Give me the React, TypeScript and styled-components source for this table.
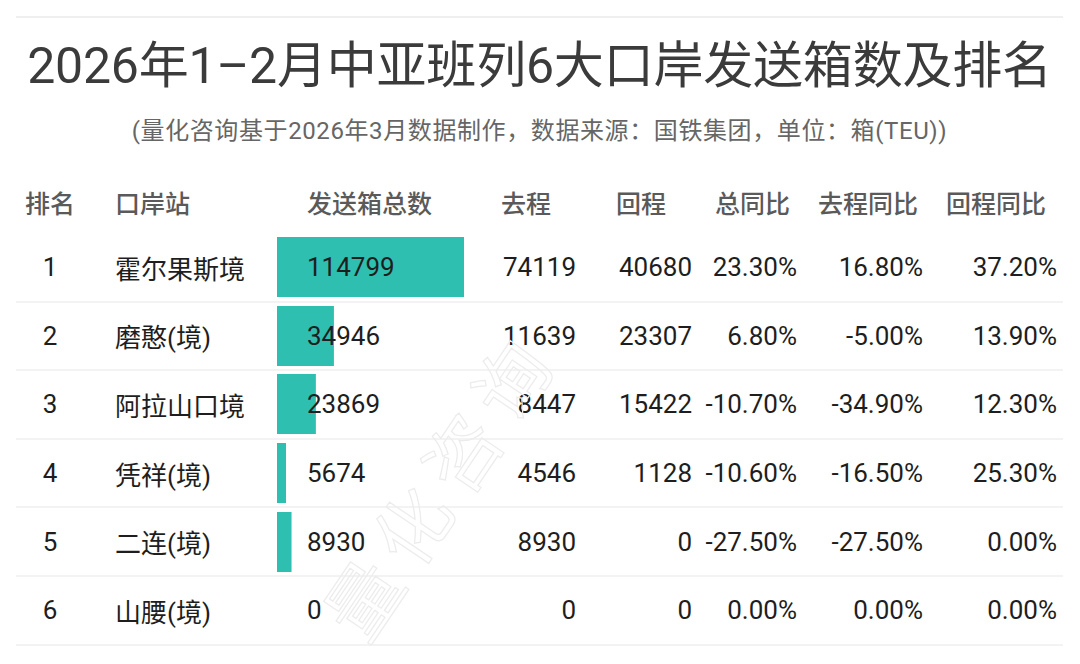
import React from "react";
import styled, { createGlobalStyle } from "styled-components";

const GlobalStyle = createGlobalStyle`
  html, body {
    margin: 0;
    padding: 0;
    background: #fff;
  }
  body {
    font-family: Roboto, "Noto Sans CJK SC", sans-serif;
  }
`;

const Page = styled.div`
  position: relative;
  width: 1080px;
  height: 664px;
  padding: 16px 17px 0 16px;
  box-sizing: border-box;
  overflow: hidden;
`;

const Rule = styled.div`
  height: 2px;
  background: #efefef;
`;

const Title = styled.h1`
  margin: 18px 0 0;
  font-size: 50px;
  line-height: 60px;
  font-weight: 400;
  color: #3b3b3b;
  text-align: center;
  letter-spacing: -0.2px;
  white-space: nowrap;
`;

const Subtitle = styled.p`
  margin: 19px 0 0;
  font-size: 24px;
  line-height: 32px;
  letter-spacing: 0.6px;
  color: #666;
  text-align: center;
  white-space: nowrap;
`;

const Table = styled.div`
  margin-top: 27px;
`;

const Row = styled.div<{ $head?: boolean }>`
  display: grid;
  grid-template-columns: 68px 193px 223px 76px 116px 105px 126px 134px;
  align-items: center;
  height: ${(p) => (p.$head ? "60px" : "68.6px")};
  padding-bottom: ${(p) => (p.$head ? "5px" : "0")};
  box-sizing: border-box;
  border-bottom: ${(p) => (p.$head ? "none" : "2px solid #f3f3f3")};
`;

const HeadCell = styled.div<{ $pad: number; $center?: boolean }>`
  font-size: 25px;
  font-weight: 500;
  color: #5a5a5a;
  padding-left: ${(p) => p.$pad}px;
  text-align: ${(p) => (p.$center ? "center" : "left")};
  white-space: nowrap;
`;

type Align = "left" | "center" | "right";

const Cell = styled.div<{ $align: Align; $pad?: number }>`
  font-size: 26px;
  color: #1e1e1e;
  text-align: ${(p) => p.$align};
  padding-left: ${(p) => p.$pad ?? 0}px;
  white-space: nowrap;
`;

const BarCell = styled.div`
  height: 100%;
  display: flex;
  align-items: center;
  padding-left: 30px;
  font-size: 26px;
  color: #1e1e1e;
  background-image: linear-gradient(#2fbfb0, #2fbfb0);
  background-repeat: no-repeat;
  background-position: left center;
`;

const Watermark = styled.div`
  position: absolute;
  left: 438px;
  top: 482px;
  transform: translate(-50%, -50%) rotate(-56deg);
  font-family: "Noto Sans CJK SC", sans-serif;
  font-size: 74px;
  line-height: 1;
  letter-spacing: 14px;
  color: transparent;
  -webkit-text-stroke: 1.2px #ececec;
  pointer-events: none;
  white-space: nowrap;
`;

const heads = [
  { label: "排名", pad: 0, center: true },
  { label: "口岸站", pad: 31 },
  { label: "发送箱总数", pad: 30 },
  { label: "去程", pad: 1 },
  { label: "回程", pad: 40 },
  { label: "总同比", pad: 23 },
  { label: "去程同比", pad: 21 },
  { label: "回程同比", pad: 23 },
];

const rows = [
  { rank: 1, port: "霍尔果斯境", total: 114799, out: 74119, back: 40680, yoy: "23.30%", outYoy: "16.80%", backYoy: "37.20%" },
  { rank: 2, port: "磨憨(境)", total: 34946, out: 11639, back: 23307, yoy: "6.80%", outYoy: "-5.00%", backYoy: "13.90%" },
  { rank: 3, port: "阿拉山口境", total: 23869, out: 8447, back: 15422, yoy: "-10.70%", outYoy: "-34.90%", backYoy: "12.30%" },
  { rank: 4, port: "凭祥(境)", total: 5674, out: 4546, back: 1128, yoy: "-10.60%", outYoy: "-16.50%", backYoy: "25.30%" },
  { rank: 5, port: "二连(境)", total: 8930, out: 8930, back: 0, yoy: "-27.50%", outYoy: "-27.50%", backYoy: "0.00%" },
  { rank: 6, port: "山腰(境)", total: 0, out: 0, back: 0, yoy: "0.00%", outYoy: "0.00%", backYoy: "0.00%" },
];

const maxTotal = Math.max(...rows.map((r) => r.total));
const barMax = 187;

export default function App() {
  return (
    <>
      <GlobalStyle />
      <Page>
        <Rule />
        <Title>2026年1–2月中亚班列6大口岸发送箱数及排名</Title>
        <Subtitle>(量化咨询基于2026年3月数据制作，数据来源：国铁集团，单位：箱(TEU))</Subtitle>
        <Table>
          <Row $head>
            {heads.map((h) => (
              <HeadCell key={h.label} $pad={h.pad} $center={h.center}>
                {h.label}
              </HeadCell>
            ))}
          </Row>
          {rows.map((r) => (
            <Row key={r.rank}>
              <Cell $align="center">{r.rank}</Cell>
              <Cell $align="left" $pad={31}>
                {r.port}
              </Cell>
              <BarCell style={{ backgroundSize: `${(r.total / maxTotal) * barMax}px 60px` }}>
                {r.total}
              </BarCell>
              <Cell $align="right">{r.out}</Cell>
              <Cell $align="right">{r.back}</Cell>
              <Cell $align="right">{r.yoy}</Cell>
              <Cell $align="right">{r.outYoy}</Cell>
              <Cell $align="right">{r.backYoy}</Cell>
            </Row>
          ))}
        </Table>
        <Watermark>量化咨询</Watermark>
      </Page>
    </>
  );
}
